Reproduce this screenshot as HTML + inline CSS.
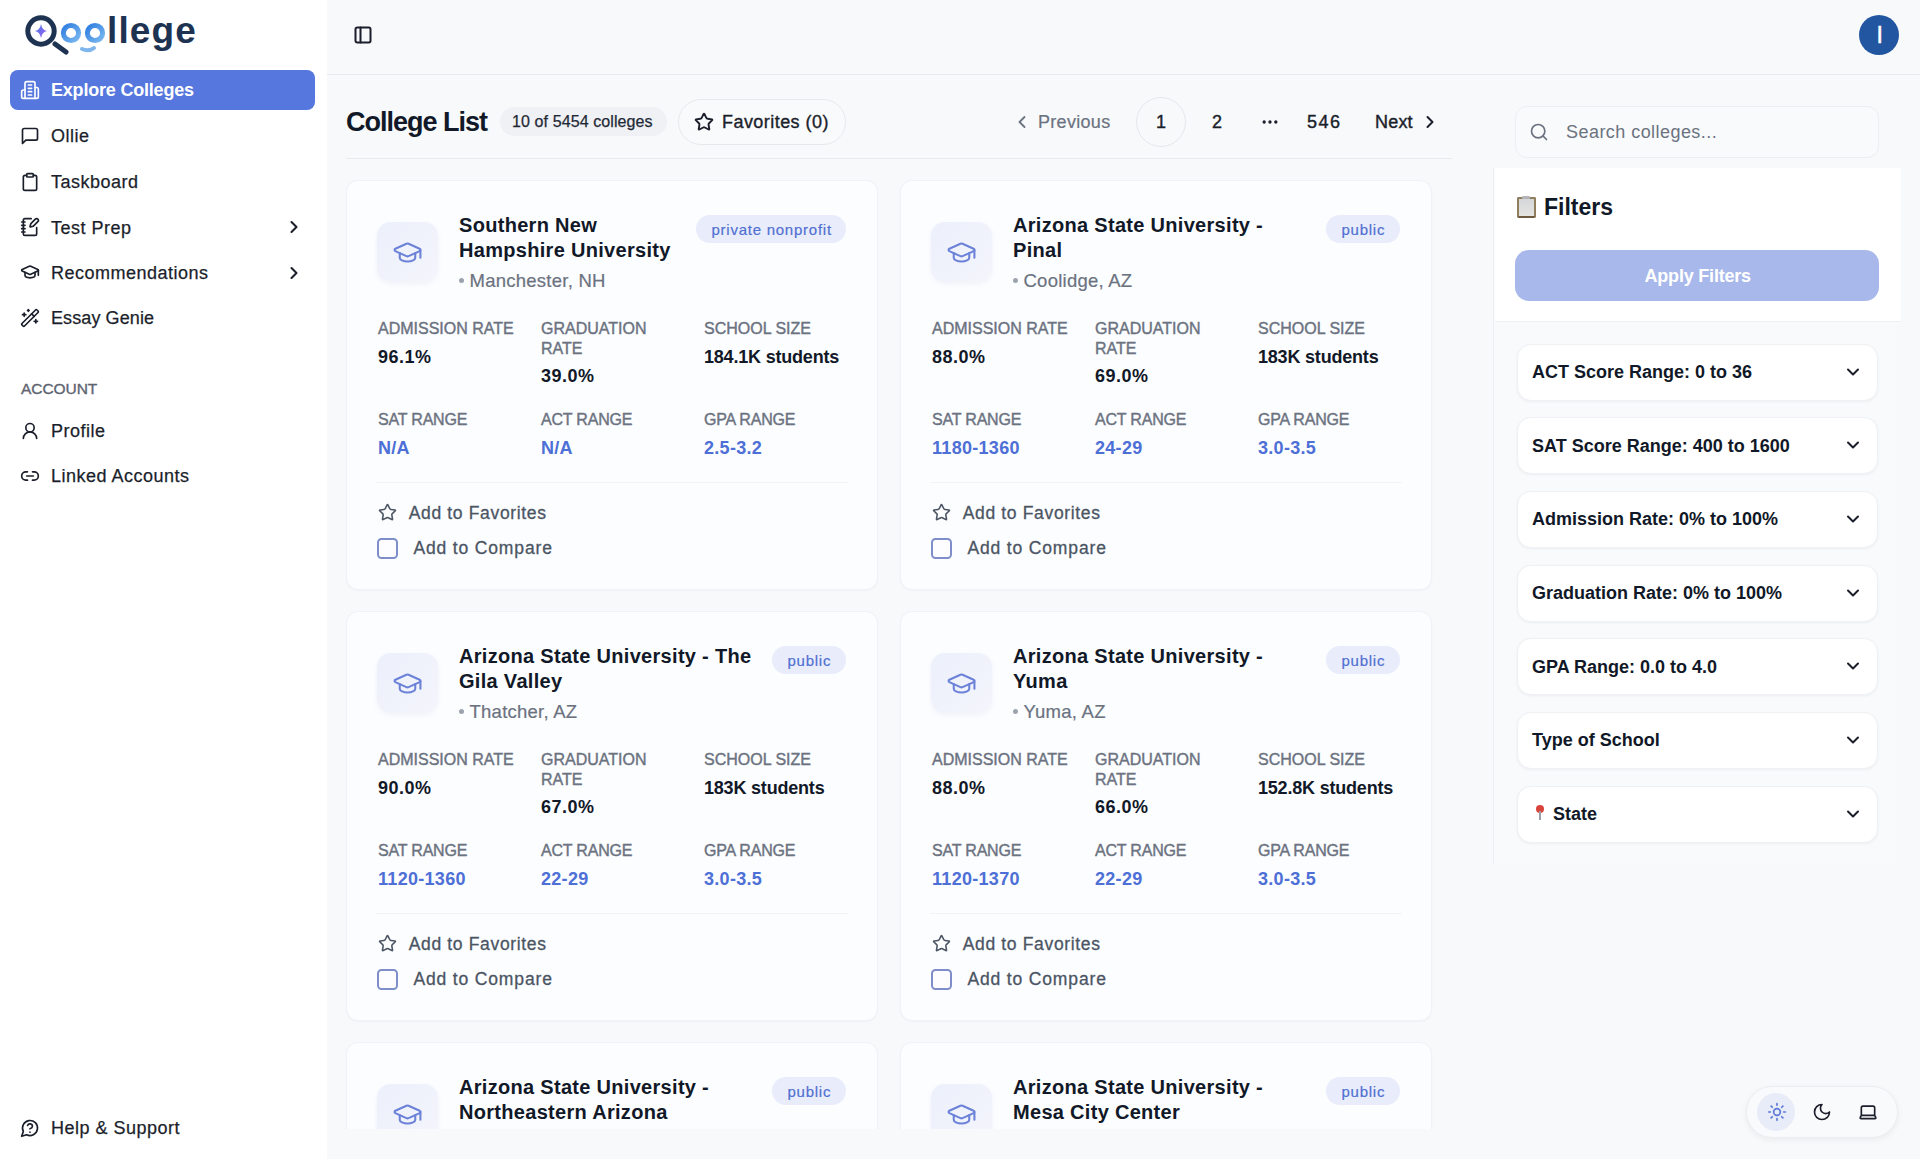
<!DOCTYPE html>
<html><head><meta charset="utf-8"><style>
*{box-sizing:border-box;margin:0;padding:0}
html,body{width:1920px;height:1159px;overflow:hidden}
body{font-family:"Liberation Sans",sans-serif;background:#f8f9fb;color:#111827;position:relative}
.t{position:absolute;white-space:nowrap;line-height:1}
.ic{position:absolute;display:block}
.box{position:absolute}
</style></head><body>
<div class="box" style="left:0;top:0;width:327px;height:1159px;background:#ffffff"></div>
<svg class="ic" style="left:0;top:0;width:240px;height:70px" viewBox="0 0 240 70">
<defs><linearGradient id="og" x1="0" y1="0" x2="1" y2="1"><stop offset="0" stop-color="#2f7de0"/><stop offset="1" stop-color="#7bb8f0"/></linearGradient>
<linearGradient id="sg" x1="0" y1="0" x2="1" y2="1"><stop offset="0" stop-color="#4a7be8"/><stop offset="1" stop-color="#9b5cf0"/></linearGradient></defs>
<circle cx="41" cy="31" r="13.2" fill="none" stroke="#1e3352" stroke-width="5"/>
<path d="M55 44 L66 52" stroke="#1e3352" stroke-width="5" stroke-linecap="round"/>
<path d="M41 24 Q42 30 47 31 Q42 32 41 38 Q40 32 35 31 Q40 30 41 24Z" fill="url(#sg)"/>
<circle cx="71" cy="33" r="7.6" fill="none" stroke="url(#og)" stroke-width="5"/>
<circle cx="95" cy="33" r="7.6" fill="none" stroke="url(#og)" stroke-width="5"/>
<path d="M82 49 Q89 52 94 48" fill="none" stroke="#7fb6ee" stroke-width="4" stroke-linecap="round"/>
<text x="107" y="42.8" font-family="Liberation Sans" font-weight="bold" font-size="37" fill="#1e3352" letter-spacing="1.1">llege</text>
</svg>
<div class="box" style="left:10px;top:70px;width:305px;height:40px;border-radius:8px;background:#5577de"></div>
<svg class="ic" style="left:20px;top:79.5px;width:20px;height:20px;" viewBox="0 0 24 24" fill="none" stroke="#ffffff" stroke-width="2" stroke-linecap="round" stroke-linejoin="round"><path d="M6 22V4a2 2 0 0 1 2-2h8a2 2 0 0 1 2 2v18Z"/><path d="M6 12H4a2 2 0 0 0-2 2v6a2 2 0 0 0 2 2h2"/><path d="M18 9h2a2 2 0 0 1 2 2v9a2 2 0 0 1-2 2h-2"/><path d="M10 6h4"/><path d="M10 10h4"/><path d="M10 14h4"/><path d="M10 18h4"/></svg>
<div class="t" style="left:51px;top:80.76px;font-size:18px;color:#ffffff;font-weight:bold;letter-spacing:-0.2px;">Explore Colleges</div>
<svg class="ic" style="left:20px;top:125.5px;width:20px;height:20px;" viewBox="0 0 24 24" fill="none" stroke="#1b1f2b" stroke-width="2" stroke-linecap="round" stroke-linejoin="round"><path d="M21 15a2 2 0 0 1-2 2H7l-4 4V5a2 2 0 0 1 2-2h14a2 2 0 0 1 2 2z"/></svg>
<div class="t" style="left:51px;top:126.76px;font-size:18px;color:#1b1f2b;font-weight:normal;letter-spacing:0.5px;-webkit-text-stroke:0.25px #1b1f2b;">Ollie</div>
<svg class="ic" style="left:20px;top:171.5px;width:20px;height:20px;" viewBox="0 0 24 24" fill="none" stroke="#1b1f2b" stroke-width="2" stroke-linecap="round" stroke-linejoin="round"><rect width="8" height="4" x="8" y="2" rx="1" ry="1"/><path d="M16 4h2a2 2 0 0 1 2 2v14a2 2 0 0 1-2 2H6a2 2 0 0 1-2-2V6a2 2 0 0 1 2-2h2"/></svg>
<div class="t" style="left:51px;top:172.76px;font-size:18px;color:#1b1f2b;font-weight:normal;letter-spacing:0.5px;-webkit-text-stroke:0.25px #1b1f2b;">Taskboard</div>
<svg class="ic" style="left:20px;top:217.25px;width:20px;height:20px;" viewBox="0 0 24 24" fill="none" stroke="#1b1f2b" stroke-width="2" stroke-linecap="round" stroke-linejoin="round"><path d="M13.4 2H6a2 2 0 0 0-2 2v16a2 2 0 0 0 2 2h12a2 2 0 0 0 2-2v-7.4"/><path d="M2 6h4"/><path d="M2 10h4"/><path d="M2 14h4"/><path d="M2 18h4"/><path d="M21.378 5.626a1 1 0 1 0-3.004-3.004l-5.01 5.012a2 2 0 0 0-.506.854l-.837 2.87a.5.5 0 0 0 .62.62l2.87-.837a2 2 0 0 0 .854-.506z"/></svg>
<div class="t" style="left:51px;top:218.51px;font-size:18px;color:#1b1f2b;font-weight:normal;letter-spacing:0.5px;-webkit-text-stroke:0.25px #1b1f2b;">Test Prep</div>
<svg class="ic" style="left:284.3px;top:217.25px;width:20px;height:20px;" viewBox="0 0 24 24" fill="none" stroke="#1b1f2b" stroke-width="2.5" stroke-linecap="round" stroke-linejoin="round"><path d="m9 18 6-6-6-6"/></svg>
<svg class="ic" style="left:20px;top:262.25px;width:20px;height:20px;" viewBox="0 0 24 24" fill="none" stroke="#1b1f2b" stroke-width="2" stroke-linecap="round" stroke-linejoin="round"><path d="M21.42 10.922a1 1 0 0 0-.019-1.838L12.83 5.18a2 2 0 0 0-1.66 0L2.6 9.08a1 1 0 0 0 0 1.832l8.57 3.908a2 2 0 0 0 1.66 0z"/><path d="M22 10v6"/><path d="M6 12.5V16a6 3 0 0 0 12 0v-3.5"/></svg>
<div class="t" style="left:51px;top:263.51px;font-size:18px;color:#1b1f2b;font-weight:normal;letter-spacing:0.5px;-webkit-text-stroke:0.25px #1b1f2b;">Recommendations</div>
<svg class="ic" style="left:284.3px;top:263.05px;width:20px;height:20px;" viewBox="0 0 24 24" fill="none" stroke="#1b1f2b" stroke-width="2.5" stroke-linecap="round" stroke-linejoin="round"><path d="m9 18 6-6-6-6"/></svg>
<svg class="ic" style="left:20px;top:308.0px;width:20px;height:20px;" viewBox="0 0 24 24" fill="none" stroke="#1b1f2b" stroke-width="2" stroke-linecap="round" stroke-linejoin="round"><path d="m21.64 3.64-1.28-1.28a1.21 1.21 0 0 0-1.72 0L2.36 18.64a1.21 1.21 0 0 0 0 1.72l1.28 1.28a1.2 1.2 0 0 0 1.72 0L21.64 5.36a1.2 1.2 0 0 0 0-1.72"/><path d="m14 7 3 3"/><path d="M5 6v4"/><path d="M19 14v4"/><path d="M10 2v2"/><path d="M7 8H3"/><path d="M21 16h-4"/><path d="M11 3H9"/></svg>
<div class="t" style="left:51px;top:309.26px;font-size:18px;color:#1b1f2b;font-weight:normal;letter-spacing:0.1px;-webkit-text-stroke:0.25px #1b1f2b;">Essay Genie</div>
<svg class="ic" style="left:20px;top:420.5px;width:20px;height:20px;" viewBox="0 0 24 24" fill="none" stroke="#1b1f2b" stroke-width="2" stroke-linecap="round" stroke-linejoin="round"><circle cx="12" cy="8" r="5"/><path d="M20 21a8 8 0 0 0-16 0"/></svg>
<div class="t" style="left:51px;top:421.76px;font-size:18px;color:#1b1f2b;font-weight:normal;letter-spacing:0.5px;-webkit-text-stroke:0.25px #1b1f2b;">Profile</div>
<svg class="ic" style="left:20px;top:465.5px;width:20px;height:20px;" viewBox="0 0 24 24" fill="none" stroke="#1b1f2b" stroke-width="2" stroke-linecap="round" stroke-linejoin="round"><path d="M9 17H7A5 5 0 0 1 7 7h2"/><path d="M15 7h2a5 5 0 1 1 0 10h-2"/><line x1="8" x2="16" y1="12" y2="12"/></svg>
<div class="t" style="left:51px;top:466.76px;font-size:18px;color:#1b1f2b;font-weight:normal;letter-spacing:0.5px;-webkit-text-stroke:0.25px #1b1f2b;">Linked Accounts</div>
<svg class="ic" style="left:20px;top:1117.9px;width:20px;height:20px;" viewBox="0 0 24 24" fill="none" stroke="#1b1f2b" stroke-width="2" stroke-linecap="round" stroke-linejoin="round"><path d="M7.9 20A9 9 0 1 0 4 16.1L2 22Z"/><path d="M9.09 9a3 3 0 0 1 5.83 1c0 2-3 3-3 3"/><path d="M12 17h.01"/></svg>
<div class="t" style="left:51px;top:1119.16px;font-size:18px;color:#1b1f2b;font-weight:normal;letter-spacing:0.5px;-webkit-text-stroke:0.25px #1b1f2b;">Help &amp; Support</div>
<div class="t" style="left:21px;top:381.48px;font-size:15.5px;color:#5d6370;font-weight:normal;letter-spacing:-0.05px;-webkit-text-stroke:0.35px #5d6370;">ACCOUNT</div>
<div class="box" style="left:327px;top:74px;width:1593px;height:1px;background:#e8eaee"></div>
<svg class="ic" style="left:353px;top:25.3px;width:20px;height:20px;" viewBox="0 0 24 24" fill="none" stroke="#1b1f2b" stroke-width="2.4" stroke-linecap="round" stroke-linejoin="round"><rect width="18" height="18" x="3" y="3" rx="2"/><path d="M9 3v18"/></svg>
<div class="box" style="left:1859px;top:14.5px;width:40px;height:40px;border-radius:50%;background:#2256a0"></div>
<div class="t" style="left:1876.6px;top:23.83px;font-size:23px;color:#ffffff;font-weight:normal;letter-spacing:0px;-webkit-text-stroke:0.5px #ffffff;">I</div>
<div class="t" style="left:346px;top:108.54px;font-size:27px;color:#111827;font-weight:bold;letter-spacing:-1px;">College List</div>
<div class="box" style="left:500px;top:107px;width:167px;height:29px;border-radius:15px;background:#eff1f4"></div>
<div class="t" style="left:512px;top:113.96px;font-size:16px;color:#1f2937;font-weight:normal;letter-spacing:0.1px;-webkit-text-stroke:0.25px #1f2937;">10 of 5454 colleges</div>
<div class="box" style="left:678px;top:99px;width:168px;height:46px;border-radius:23px;border:1.5px solid #e8e9ed;background:#f9fafb"></div>
<svg class="ic" style="left:694px;top:111.5px;width:20px;height:20px;" viewBox="0 0 24 24" fill="none" stroke="#1b1f2b" stroke-width="2.3" stroke-linecap="round" stroke-linejoin="round"><path d="M11.525 2.295a.53.53 0 0 1 .95 0l2.31 4.679a2.123 2.123 0 0 0 1.595 1.16l5.166.756a.53.53 0 0 1 .294.904l-3.736 3.638a2.123 2.123 0 0 0-.611 1.878l.882 5.14a.53.53 0 0 1-.771.56l-4.618-2.428a2.122 2.122 0 0 0-1.973 0L6.396 21.01a.53.53 0 0 1-.77-.56l.881-5.139a2.122 2.122 0 0 0-.611-1.879L2.16 9.795a.53.53 0 0 1 .294-.906l5.165-.755a2.122 2.122 0 0 0 1.597-1.16z"/></svg>
<div class="t" style="left:722px;top:113.16px;font-size:18px;color:#1b1f2b;font-weight:normal;letter-spacing:0.45px;-webkit-text-stroke:0.35px #1b1f2b;">Favorites (0)</div>
<svg class="ic" style="left:1012px;top:112px;width:20px;height:20px;" viewBox="0 0 24 24" fill="none" stroke="#6b7280" stroke-width="2.2" stroke-linecap="round" stroke-linejoin="round"><path d="m15 18-6-6 6-6"/></svg>
<div class="t" style="left:1038px;top:112.96px;font-size:18px;color:#6b7280;font-weight:normal;letter-spacing:0.3px;-webkit-text-stroke:0.2px #6b7280;">Previous</div>
<div class="box" style="left:1136px;top:97px;width:50px;height:50px;border-radius:50%;border:1px solid #e5e7eb"></div>
<div class="t" style="left:1156px;top:112.96px;font-size:18px;color:#1b1f2b;font-weight:normal;letter-spacing:0px;-webkit-text-stroke:0.4px #1b1f2b;">1</div>
<div class="t" style="left:1212px;top:112.96px;font-size:18px;color:#1b1f2b;font-weight:normal;letter-spacing:0px;-webkit-text-stroke:0.4px #1b1f2b;">2</div>
<svg class="ic" style="left:1260px;top:111.5px;width:20px;height:20px;" viewBox="0 0 24 24" fill="none" stroke="#1b1f2b" stroke-width="2" stroke-linecap="round" stroke-linejoin="round"><circle cx="12" cy="12" r="1"/><circle cx="19" cy="12" r="1"/><circle cx="5" cy="12" r="1"/></svg>
<div class="t" style="left:1307px;top:112.96px;font-size:18px;color:#1b1f2b;font-weight:normal;letter-spacing:1.5px;-webkit-text-stroke:0.4px #1b1f2b;">546</div>
<div class="t" style="left:1375px;top:112.96px;font-size:18px;color:#1b1f2b;font-weight:normal;letter-spacing:0.2px;-webkit-text-stroke:0.4px #1b1f2b;">Next</div>
<svg class="ic" style="left:1420px;top:112px;width:20px;height:20px;" viewBox="0 0 24 24" fill="none" stroke="#1b1f2b" stroke-width="2.4" stroke-linecap="round" stroke-linejoin="round"><path d="m9 18 6-6-6-6"/></svg>
<div class="box" style="left:346px;top:157.5px;width:1106px;height:1.5px;background:#e8eaee"></div>
<div class="box" style="left:327px;top:0;width:1160px;height:1128.5px;overflow:hidden">
<div class="box" style="left:19px;top:180px;width:532px;height:410px;background:#fcfdff;border:1px solid #f1f2f5;border-radius:12px;overflow:hidden;box-shadow:0 1px 2px rgba(16,24,40,0.03)">
<div class="box" style="left:30px;top:41px;width:61px;height:60px;border-radius:14px;background:linear-gradient(135deg,#ecf0fb,#f4f5fc);box-shadow:0 2px 5px rgba(80,100,170,0.07)"></div>
<svg class="ic" style="left:45.2px;top:55.7px;width:31px;height:31px;" viewBox="0 0 24 24" fill="none" stroke="#6b82d8" stroke-width="1.6" stroke-linecap="round" stroke-linejoin="round"><path d="M21.42 10.922a1 1 0 0 0-.019-1.838L12.83 5.18a2 2 0 0 0-1.66 0L2.6 9.08a1 1 0 0 0 0 1.832l8.57 3.908a2 2 0 0 0 1.66 0z"/><path d="M22 10v6"/><path d="M6 12.5V16a6 3 0 0 0 12 0v-3.5"/></svg>
<div class="t" style="left:112px;top:33.77px;font-size:20px;color:#111827;font-weight:bold;letter-spacing:0.3px;">Southern New</div>
<div class="t" style="left:112px;top:58.77px;font-size:20px;color:#111827;font-weight:bold;letter-spacing:0.3px;">Hampshire University</div>
<div class="box" style="left:112.2px;top:96.9px;width:5px;height:5px;border-radius:50%;background:#9ca3af"></div>
<div class="t" style="left:122.5px;top:91.04px;font-size:18.5px;color:#6b7280;font-weight:normal;letter-spacing:0.25px;-webkit-text-stroke:0.2px #6b7280;">Manchester, NH</div>
<div class="box" style="left:349px;top:33.5px;width:150px;height:28px;border-radius:14px;background:#e9edfb"></div>
<div class="t" style="left:364.5px;top:40.50px;font-size:15px;color:#5070d2;font-weight:normal;letter-spacing:0.75px;-webkit-text-stroke:0.2px #5070d2;">private nonprofit</div>
<div class="t" style="left:31px;top:140.46px;font-size:16px;color:#6b7280;font-weight:normal;letter-spacing:0px;-webkit-text-stroke:0.4px #6b7280;">ADMISSION RATE</div>
<div class="t" style="left:194px;top:140.46px;font-size:16px;color:#6b7280;font-weight:normal;letter-spacing:0px;-webkit-text-stroke:0.4px #6b7280;">GRADUATION</div>
<div class="t" style="left:194px;top:160.46px;font-size:16px;color:#6b7280;font-weight:normal;letter-spacing:0px;-webkit-text-stroke:0.4px #6b7280;">RATE</div>
<div class="t" style="left:357px;top:140.46px;font-size:16px;color:#6b7280;font-weight:normal;letter-spacing:0px;-webkit-text-stroke:0.4px #6b7280;">SCHOOL SIZE</div>
<div class="t" style="left:31px;top:166.56px;font-size:18px;color:#111827;font-weight:bold;letter-spacing:0.5px;">96.1%</div>
<div class="t" style="left:194px;top:186.36px;font-size:18px;color:#111827;font-weight:bold;letter-spacing:0.5px;">39.0%</div>
<div class="t" style="left:357px;top:166.56px;font-size:18px;color:#111827;font-weight:bold;letter-spacing:-0.2px;">184.1K students</div>
<div class="t" style="left:31px;top:230.66px;font-size:16px;color:#6b7280;font-weight:normal;letter-spacing:-0.2px;-webkit-text-stroke:0.4px #6b7280;">SAT RANGE</div>
<div class="t" style="left:31px;top:257.56px;font-size:18px;color:#4d6fd6;font-weight:bold;letter-spacing:0.3px;">N/A</div>
<div class="t" style="left:194px;top:230.66px;font-size:16px;color:#6b7280;font-weight:normal;letter-spacing:-0.2px;-webkit-text-stroke:0.4px #6b7280;">ACT RANGE</div>
<div class="t" style="left:194px;top:257.56px;font-size:18px;color:#4d6fd6;font-weight:bold;letter-spacing:0.3px;">N/A</div>
<div class="t" style="left:357px;top:230.66px;font-size:16px;color:#6b7280;font-weight:normal;letter-spacing:-0.2px;-webkit-text-stroke:0.4px #6b7280;">GPA RANGE</div>
<div class="t" style="left:357px;top:257.56px;font-size:18px;color:#4d6fd6;font-weight:bold;letter-spacing:0.3px;">2.5-3.2</div>
<div class="box" style="left:29px;top:300.5px;width:472px;height:1px;background:#f3f4f6"></div>
<svg class="ic" style="left:30.7px;top:322.3px;width:19px;height:19px;" viewBox="0 0 24 24" fill="none" stroke="#4b5563" stroke-width="2" stroke-linecap="round" stroke-linejoin="round"><path d="M11.525 2.295a.53.53 0 0 1 .95 0l2.31 4.679a2.123 2.123 0 0 0 1.595 1.16l5.166.756a.53.53 0 0 1 .294.904l-3.736 3.638a2.123 2.123 0 0 0-.611 1.878l.882 5.14a.53.53 0 0 1-.771.56l-4.618-2.428a2.122 2.122 0 0 0-1.973 0L6.396 21.01a.53.53 0 0 1-.77-.56l.881-5.139a2.122 2.122 0 0 0-.611-1.879L2.16 9.795a.53.53 0 0 1 .294-.906l5.165-.755a2.122 2.122 0 0 0 1.597-1.16z"/></svg>
<div class="t" style="left:61.75px;top:324.19px;font-size:17.5px;color:#4b5563;font-weight:normal;letter-spacing:0.65px;-webkit-text-stroke:0.3px #4b5563;">Add to Favorites</div>
<div class="box" style="left:30px;top:357px;width:20.5px;height:20.5px;border-radius:4.5px;border:2px solid #7f8dca;background:#fdfdff"></div>
<div class="t" style="left:66.4px;top:359.39px;font-size:17.5px;color:#4b5563;font-weight:normal;letter-spacing:0.85px;-webkit-text-stroke:0.3px #4b5563;">Add to Compare</div>
</div>
<div class="box" style="left:573px;top:180px;width:532px;height:410px;background:#fcfdff;border:1px solid #f1f2f5;border-radius:12px;overflow:hidden;box-shadow:0 1px 2px rgba(16,24,40,0.03)">
<div class="box" style="left:30px;top:41px;width:61px;height:60px;border-radius:14px;background:linear-gradient(135deg,#ecf0fb,#f4f5fc);box-shadow:0 2px 5px rgba(80,100,170,0.07)"></div>
<svg class="ic" style="left:45.2px;top:55.7px;width:31px;height:31px;" viewBox="0 0 24 24" fill="none" stroke="#6b82d8" stroke-width="1.6" stroke-linecap="round" stroke-linejoin="round"><path d="M21.42 10.922a1 1 0 0 0-.019-1.838L12.83 5.18a2 2 0 0 0-1.66 0L2.6 9.08a1 1 0 0 0 0 1.832l8.57 3.908a2 2 0 0 0 1.66 0z"/><path d="M22 10v6"/><path d="M6 12.5V16a6 3 0 0 0 12 0v-3.5"/></svg>
<div class="t" style="left:112px;top:33.77px;font-size:20px;color:#111827;font-weight:bold;letter-spacing:0.3px;">Arizona State University -</div>
<div class="t" style="left:112px;top:58.77px;font-size:20px;color:#111827;font-weight:bold;letter-spacing:0.3px;">Pinal</div>
<div class="box" style="left:112.2px;top:96.9px;width:5px;height:5px;border-radius:50%;background:#9ca3af"></div>
<div class="t" style="left:122.5px;top:91.04px;font-size:18.5px;color:#6b7280;font-weight:normal;letter-spacing:0.25px;-webkit-text-stroke:0.2px #6b7280;">Coolidge, AZ</div>
<div class="box" style="left:425px;top:33.5px;width:74px;height:28px;border-radius:14px;background:#e9edfb"></div>
<div class="t" style="left:440.5px;top:40.50px;font-size:15px;color:#5070d2;font-weight:normal;letter-spacing:0.75px;-webkit-text-stroke:0.2px #5070d2;">public</div>
<div class="t" style="left:31px;top:140.46px;font-size:16px;color:#6b7280;font-weight:normal;letter-spacing:0px;-webkit-text-stroke:0.4px #6b7280;">ADMISSION RATE</div>
<div class="t" style="left:194px;top:140.46px;font-size:16px;color:#6b7280;font-weight:normal;letter-spacing:0px;-webkit-text-stroke:0.4px #6b7280;">GRADUATION</div>
<div class="t" style="left:194px;top:160.46px;font-size:16px;color:#6b7280;font-weight:normal;letter-spacing:0px;-webkit-text-stroke:0.4px #6b7280;">RATE</div>
<div class="t" style="left:357px;top:140.46px;font-size:16px;color:#6b7280;font-weight:normal;letter-spacing:0px;-webkit-text-stroke:0.4px #6b7280;">SCHOOL SIZE</div>
<div class="t" style="left:31px;top:166.56px;font-size:18px;color:#111827;font-weight:bold;letter-spacing:0.5px;">88.0%</div>
<div class="t" style="left:194px;top:186.36px;font-size:18px;color:#111827;font-weight:bold;letter-spacing:0.5px;">69.0%</div>
<div class="t" style="left:357px;top:166.56px;font-size:18px;color:#111827;font-weight:bold;letter-spacing:-0.2px;">183K students</div>
<div class="t" style="left:31px;top:230.66px;font-size:16px;color:#6b7280;font-weight:normal;letter-spacing:-0.2px;-webkit-text-stroke:0.4px #6b7280;">SAT RANGE</div>
<div class="t" style="left:31px;top:257.56px;font-size:18px;color:#4d6fd6;font-weight:bold;letter-spacing:0.3px;">1180-1360</div>
<div class="t" style="left:194px;top:230.66px;font-size:16px;color:#6b7280;font-weight:normal;letter-spacing:-0.2px;-webkit-text-stroke:0.4px #6b7280;">ACT RANGE</div>
<div class="t" style="left:194px;top:257.56px;font-size:18px;color:#4d6fd6;font-weight:bold;letter-spacing:0.3px;">24-29</div>
<div class="t" style="left:357px;top:230.66px;font-size:16px;color:#6b7280;font-weight:normal;letter-spacing:-0.2px;-webkit-text-stroke:0.4px #6b7280;">GPA RANGE</div>
<div class="t" style="left:357px;top:257.56px;font-size:18px;color:#4d6fd6;font-weight:bold;letter-spacing:0.3px;">3.0-3.5</div>
<div class="box" style="left:29px;top:300.5px;width:472px;height:1px;background:#f3f4f6"></div>
<svg class="ic" style="left:30.7px;top:322.3px;width:19px;height:19px;" viewBox="0 0 24 24" fill="none" stroke="#4b5563" stroke-width="2" stroke-linecap="round" stroke-linejoin="round"><path d="M11.525 2.295a.53.53 0 0 1 .95 0l2.31 4.679a2.123 2.123 0 0 0 1.595 1.16l5.166.756a.53.53 0 0 1 .294.904l-3.736 3.638a2.123 2.123 0 0 0-.611 1.878l.882 5.14a.53.53 0 0 1-.771.56l-4.618-2.428a2.122 2.122 0 0 0-1.973 0L6.396 21.01a.53.53 0 0 1-.77-.56l.881-5.139a2.122 2.122 0 0 0-.611-1.879L2.16 9.795a.53.53 0 0 1 .294-.906l5.165-.755a2.122 2.122 0 0 0 1.597-1.16z"/></svg>
<div class="t" style="left:61.75px;top:324.19px;font-size:17.5px;color:#4b5563;font-weight:normal;letter-spacing:0.65px;-webkit-text-stroke:0.3px #4b5563;">Add to Favorites</div>
<div class="box" style="left:30px;top:357px;width:20.5px;height:20.5px;border-radius:4.5px;border:2px solid #7f8dca;background:#fdfdff"></div>
<div class="t" style="left:66.4px;top:359.39px;font-size:17.5px;color:#4b5563;font-weight:normal;letter-spacing:0.85px;-webkit-text-stroke:0.3px #4b5563;">Add to Compare</div>
</div>
<div class="box" style="left:19px;top:611px;width:532px;height:410px;background:#fcfdff;border:1px solid #f1f2f5;border-radius:12px;overflow:hidden;box-shadow:0 1px 2px rgba(16,24,40,0.03)">
<div class="box" style="left:30px;top:41px;width:61px;height:60px;border-radius:14px;background:linear-gradient(135deg,#ecf0fb,#f4f5fc);box-shadow:0 2px 5px rgba(80,100,170,0.07)"></div>
<svg class="ic" style="left:45.2px;top:55.7px;width:31px;height:31px;" viewBox="0 0 24 24" fill="none" stroke="#6b82d8" stroke-width="1.6" stroke-linecap="round" stroke-linejoin="round"><path d="M21.42 10.922a1 1 0 0 0-.019-1.838L12.83 5.18a2 2 0 0 0-1.66 0L2.6 9.08a1 1 0 0 0 0 1.832l8.57 3.908a2 2 0 0 0 1.66 0z"/><path d="M22 10v6"/><path d="M6 12.5V16a6 3 0 0 0 12 0v-3.5"/></svg>
<div class="t" style="left:112px;top:33.77px;font-size:20px;color:#111827;font-weight:bold;letter-spacing:0.3px;">Arizona State University - The</div>
<div class="t" style="left:112px;top:58.77px;font-size:20px;color:#111827;font-weight:bold;letter-spacing:0.3px;">Gila Valley</div>
<div class="box" style="left:112.2px;top:96.9px;width:5px;height:5px;border-radius:50%;background:#9ca3af"></div>
<div class="t" style="left:122.5px;top:91.04px;font-size:18.5px;color:#6b7280;font-weight:normal;letter-spacing:0.25px;-webkit-text-stroke:0.2px #6b7280;">Thatcher, AZ</div>
<div class="box" style="left:425px;top:33.5px;width:74px;height:28px;border-radius:14px;background:#e9edfb"></div>
<div class="t" style="left:440.5px;top:40.50px;font-size:15px;color:#5070d2;font-weight:normal;letter-spacing:0.75px;-webkit-text-stroke:0.2px #5070d2;">public</div>
<div class="t" style="left:31px;top:140.46px;font-size:16px;color:#6b7280;font-weight:normal;letter-spacing:0px;-webkit-text-stroke:0.4px #6b7280;">ADMISSION RATE</div>
<div class="t" style="left:194px;top:140.46px;font-size:16px;color:#6b7280;font-weight:normal;letter-spacing:0px;-webkit-text-stroke:0.4px #6b7280;">GRADUATION</div>
<div class="t" style="left:194px;top:160.46px;font-size:16px;color:#6b7280;font-weight:normal;letter-spacing:0px;-webkit-text-stroke:0.4px #6b7280;">RATE</div>
<div class="t" style="left:357px;top:140.46px;font-size:16px;color:#6b7280;font-weight:normal;letter-spacing:0px;-webkit-text-stroke:0.4px #6b7280;">SCHOOL SIZE</div>
<div class="t" style="left:31px;top:166.56px;font-size:18px;color:#111827;font-weight:bold;letter-spacing:0.5px;">90.0%</div>
<div class="t" style="left:194px;top:186.36px;font-size:18px;color:#111827;font-weight:bold;letter-spacing:0.5px;">67.0%</div>
<div class="t" style="left:357px;top:166.56px;font-size:18px;color:#111827;font-weight:bold;letter-spacing:-0.2px;">183K students</div>
<div class="t" style="left:31px;top:230.66px;font-size:16px;color:#6b7280;font-weight:normal;letter-spacing:-0.2px;-webkit-text-stroke:0.4px #6b7280;">SAT RANGE</div>
<div class="t" style="left:31px;top:257.56px;font-size:18px;color:#4d6fd6;font-weight:bold;letter-spacing:0.3px;">1120-1360</div>
<div class="t" style="left:194px;top:230.66px;font-size:16px;color:#6b7280;font-weight:normal;letter-spacing:-0.2px;-webkit-text-stroke:0.4px #6b7280;">ACT RANGE</div>
<div class="t" style="left:194px;top:257.56px;font-size:18px;color:#4d6fd6;font-weight:bold;letter-spacing:0.3px;">22-29</div>
<div class="t" style="left:357px;top:230.66px;font-size:16px;color:#6b7280;font-weight:normal;letter-spacing:-0.2px;-webkit-text-stroke:0.4px #6b7280;">GPA RANGE</div>
<div class="t" style="left:357px;top:257.56px;font-size:18px;color:#4d6fd6;font-weight:bold;letter-spacing:0.3px;">3.0-3.5</div>
<div class="box" style="left:29px;top:300.5px;width:472px;height:1px;background:#f3f4f6"></div>
<svg class="ic" style="left:30.7px;top:322.3px;width:19px;height:19px;" viewBox="0 0 24 24" fill="none" stroke="#4b5563" stroke-width="2" stroke-linecap="round" stroke-linejoin="round"><path d="M11.525 2.295a.53.53 0 0 1 .95 0l2.31 4.679a2.123 2.123 0 0 0 1.595 1.16l5.166.756a.53.53 0 0 1 .294.904l-3.736 3.638a2.123 2.123 0 0 0-.611 1.878l.882 5.14a.53.53 0 0 1-.771.56l-4.618-2.428a2.122 2.122 0 0 0-1.973 0L6.396 21.01a.53.53 0 0 1-.77-.56l.881-5.139a2.122 2.122 0 0 0-.611-1.879L2.16 9.795a.53.53 0 0 1 .294-.906l5.165-.755a2.122 2.122 0 0 0 1.597-1.16z"/></svg>
<div class="t" style="left:61.75px;top:324.19px;font-size:17.5px;color:#4b5563;font-weight:normal;letter-spacing:0.65px;-webkit-text-stroke:0.3px #4b5563;">Add to Favorites</div>
<div class="box" style="left:30px;top:357px;width:20.5px;height:20.5px;border-radius:4.5px;border:2px solid #7f8dca;background:#fdfdff"></div>
<div class="t" style="left:66.4px;top:359.39px;font-size:17.5px;color:#4b5563;font-weight:normal;letter-spacing:0.85px;-webkit-text-stroke:0.3px #4b5563;">Add to Compare</div>
</div>
<div class="box" style="left:573px;top:611px;width:532px;height:410px;background:#fcfdff;border:1px solid #f1f2f5;border-radius:12px;overflow:hidden;box-shadow:0 1px 2px rgba(16,24,40,0.03)">
<div class="box" style="left:30px;top:41px;width:61px;height:60px;border-radius:14px;background:linear-gradient(135deg,#ecf0fb,#f4f5fc);box-shadow:0 2px 5px rgba(80,100,170,0.07)"></div>
<svg class="ic" style="left:45.2px;top:55.7px;width:31px;height:31px;" viewBox="0 0 24 24" fill="none" stroke="#6b82d8" stroke-width="1.6" stroke-linecap="round" stroke-linejoin="round"><path d="M21.42 10.922a1 1 0 0 0-.019-1.838L12.83 5.18a2 2 0 0 0-1.66 0L2.6 9.08a1 1 0 0 0 0 1.832l8.57 3.908a2 2 0 0 0 1.66 0z"/><path d="M22 10v6"/><path d="M6 12.5V16a6 3 0 0 0 12 0v-3.5"/></svg>
<div class="t" style="left:112px;top:33.77px;font-size:20px;color:#111827;font-weight:bold;letter-spacing:0.3px;">Arizona State University -</div>
<div class="t" style="left:112px;top:58.77px;font-size:20px;color:#111827;font-weight:bold;letter-spacing:0.3px;">Yuma</div>
<div class="box" style="left:112.2px;top:96.9px;width:5px;height:5px;border-radius:50%;background:#9ca3af"></div>
<div class="t" style="left:122.5px;top:91.04px;font-size:18.5px;color:#6b7280;font-weight:normal;letter-spacing:0.25px;-webkit-text-stroke:0.2px #6b7280;">Yuma, AZ</div>
<div class="box" style="left:425px;top:33.5px;width:74px;height:28px;border-radius:14px;background:#e9edfb"></div>
<div class="t" style="left:440.5px;top:40.50px;font-size:15px;color:#5070d2;font-weight:normal;letter-spacing:0.75px;-webkit-text-stroke:0.2px #5070d2;">public</div>
<div class="t" style="left:31px;top:140.46px;font-size:16px;color:#6b7280;font-weight:normal;letter-spacing:0px;-webkit-text-stroke:0.4px #6b7280;">ADMISSION RATE</div>
<div class="t" style="left:194px;top:140.46px;font-size:16px;color:#6b7280;font-weight:normal;letter-spacing:0px;-webkit-text-stroke:0.4px #6b7280;">GRADUATION</div>
<div class="t" style="left:194px;top:160.46px;font-size:16px;color:#6b7280;font-weight:normal;letter-spacing:0px;-webkit-text-stroke:0.4px #6b7280;">RATE</div>
<div class="t" style="left:357px;top:140.46px;font-size:16px;color:#6b7280;font-weight:normal;letter-spacing:0px;-webkit-text-stroke:0.4px #6b7280;">SCHOOL SIZE</div>
<div class="t" style="left:31px;top:166.56px;font-size:18px;color:#111827;font-weight:bold;letter-spacing:0.5px;">88.0%</div>
<div class="t" style="left:194px;top:186.36px;font-size:18px;color:#111827;font-weight:bold;letter-spacing:0.5px;">66.0%</div>
<div class="t" style="left:357px;top:166.56px;font-size:18px;color:#111827;font-weight:bold;letter-spacing:-0.2px;">152.8K students</div>
<div class="t" style="left:31px;top:230.66px;font-size:16px;color:#6b7280;font-weight:normal;letter-spacing:-0.2px;-webkit-text-stroke:0.4px #6b7280;">SAT RANGE</div>
<div class="t" style="left:31px;top:257.56px;font-size:18px;color:#4d6fd6;font-weight:bold;letter-spacing:0.3px;">1120-1370</div>
<div class="t" style="left:194px;top:230.66px;font-size:16px;color:#6b7280;font-weight:normal;letter-spacing:-0.2px;-webkit-text-stroke:0.4px #6b7280;">ACT RANGE</div>
<div class="t" style="left:194px;top:257.56px;font-size:18px;color:#4d6fd6;font-weight:bold;letter-spacing:0.3px;">22-29</div>
<div class="t" style="left:357px;top:230.66px;font-size:16px;color:#6b7280;font-weight:normal;letter-spacing:-0.2px;-webkit-text-stroke:0.4px #6b7280;">GPA RANGE</div>
<div class="t" style="left:357px;top:257.56px;font-size:18px;color:#4d6fd6;font-weight:bold;letter-spacing:0.3px;">3.0-3.5</div>
<div class="box" style="left:29px;top:300.5px;width:472px;height:1px;background:#f3f4f6"></div>
<svg class="ic" style="left:30.7px;top:322.3px;width:19px;height:19px;" viewBox="0 0 24 24" fill="none" stroke="#4b5563" stroke-width="2" stroke-linecap="round" stroke-linejoin="round"><path d="M11.525 2.295a.53.53 0 0 1 .95 0l2.31 4.679a2.123 2.123 0 0 0 1.595 1.16l5.166.756a.53.53 0 0 1 .294.904l-3.736 3.638a2.123 2.123 0 0 0-.611 1.878l.882 5.14a.53.53 0 0 1-.771.56l-4.618-2.428a2.122 2.122 0 0 0-1.973 0L6.396 21.01a.53.53 0 0 1-.77-.56l.881-5.139a2.122 2.122 0 0 0-.611-1.879L2.16 9.795a.53.53 0 0 1 .294-.906l5.165-.755a2.122 2.122 0 0 0 1.597-1.16z"/></svg>
<div class="t" style="left:61.75px;top:324.19px;font-size:17.5px;color:#4b5563;font-weight:normal;letter-spacing:0.65px;-webkit-text-stroke:0.3px #4b5563;">Add to Favorites</div>
<div class="box" style="left:30px;top:357px;width:20.5px;height:20.5px;border-radius:4.5px;border:2px solid #7f8dca;background:#fdfdff"></div>
<div class="t" style="left:66.4px;top:359.39px;font-size:17.5px;color:#4b5563;font-weight:normal;letter-spacing:0.85px;-webkit-text-stroke:0.3px #4b5563;">Add to Compare</div>
</div>
<div class="box" style="left:19px;top:1042px;width:532px;height:410px;background:#fcfdff;border:1px solid #f1f2f5;border-radius:12px;overflow:hidden;box-shadow:0 1px 2px rgba(16,24,40,0.03)">
<div class="box" style="left:30px;top:41px;width:61px;height:60px;border-radius:14px;background:linear-gradient(135deg,#ecf0fb,#f4f5fc);box-shadow:0 2px 5px rgba(80,100,170,0.07)"></div>
<svg class="ic" style="left:45.2px;top:55.7px;width:31px;height:31px;" viewBox="0 0 24 24" fill="none" stroke="#6b82d8" stroke-width="1.6" stroke-linecap="round" stroke-linejoin="round"><path d="M21.42 10.922a1 1 0 0 0-.019-1.838L12.83 5.18a2 2 0 0 0-1.66 0L2.6 9.08a1 1 0 0 0 0 1.832l8.57 3.908a2 2 0 0 0 1.66 0z"/><path d="M22 10v6"/><path d="M6 12.5V16a6 3 0 0 0 12 0v-3.5"/></svg>
<div class="t" style="left:112px;top:33.77px;font-size:20px;color:#111827;font-weight:bold;letter-spacing:0.3px;">Arizona State University -</div>
<div class="t" style="left:112px;top:58.77px;font-size:20px;color:#111827;font-weight:bold;letter-spacing:0.3px;">Northeastern Arizona</div>
<div class="box" style="left:425px;top:33.5px;width:74px;height:28px;border-radius:14px;background:#e9edfb"></div>
<div class="t" style="left:440.5px;top:40.50px;font-size:15px;color:#5070d2;font-weight:normal;letter-spacing:0.75px;-webkit-text-stroke:0.2px #5070d2;">public</div>
</div>
<div class="box" style="left:573px;top:1042px;width:532px;height:410px;background:#fcfdff;border:1px solid #f1f2f5;border-radius:12px;overflow:hidden;box-shadow:0 1px 2px rgba(16,24,40,0.03)">
<div class="box" style="left:30px;top:41px;width:61px;height:60px;border-radius:14px;background:linear-gradient(135deg,#ecf0fb,#f4f5fc);box-shadow:0 2px 5px rgba(80,100,170,0.07)"></div>
<svg class="ic" style="left:45.2px;top:55.7px;width:31px;height:31px;" viewBox="0 0 24 24" fill="none" stroke="#6b82d8" stroke-width="1.6" stroke-linecap="round" stroke-linejoin="round"><path d="M21.42 10.922a1 1 0 0 0-.019-1.838L12.83 5.18a2 2 0 0 0-1.66 0L2.6 9.08a1 1 0 0 0 0 1.832l8.57 3.908a2 2 0 0 0 1.66 0z"/><path d="M22 10v6"/><path d="M6 12.5V16a6 3 0 0 0 12 0v-3.5"/></svg>
<div class="t" style="left:112px;top:33.77px;font-size:20px;color:#111827;font-weight:bold;letter-spacing:0.3px;">Arizona State University -</div>
<div class="t" style="left:112px;top:58.77px;font-size:20px;color:#111827;font-weight:bold;letter-spacing:0.3px;">Mesa City Center</div>
<div class="box" style="left:425px;top:33.5px;width:74px;height:28px;border-radius:14px;background:#e9edfb"></div>
<div class="t" style="left:440.5px;top:40.50px;font-size:15px;color:#5070d2;font-weight:normal;letter-spacing:0.75px;-webkit-text-stroke:0.2px #5070d2;">public</div>
</div>
</div>
<div class="box" style="left:1515px;top:106px;width:364px;height:52px;border-radius:12px;border:1px solid #eceef2;background:#f9fafb"></div>
<svg class="ic" style="left:1529px;top:122px;width:20px;height:20px;" viewBox="0 0 24 24" fill="none" stroke="#6b7280" stroke-width="2" stroke-linecap="round" stroke-linejoin="round"><circle cx="11" cy="11" r="8"/><path d="m21 21-4.3-4.3"/></svg>
<div class="t" style="left:1566px;top:123.36px;font-size:18px;color:#6b7280;font-weight:normal;letter-spacing:0.45px;">Search colleges...</div>
<div class="box" style="left:1493px;top:167px;width:403px;height:697px;background:#f9fafc;border-left:1.5px solid #eceef1"></div>
<div class="box" style="left:1494.5px;top:168px;width:406.5px;height:154px;background:#ffffff;border-bottom:1px solid #eef0f3"></div>
<div class="box" style="left:1516.5px;top:197px;width:19.5px;height:20.5px;border-radius:2px;background:linear-gradient(180deg,#d6d7da,#e4e4e2);border:2px solid #8f7f5c;border-bottom-color:#6e5a3e"></div>
<div class="box" style="left:1522px;top:195.5px;width:8px;height:3px;border-radius:1px;background:#b4b4b9"></div>
<div class="t" style="left:1544px;top:195.53px;font-size:23px;color:#111827;font-weight:bold;letter-spacing:0px;">Filters</div>
<div class="box" style="left:1515px;top:250px;width:364px;height:51px;border-radius:14px;background:#a8b8ea"></div>
<div class="t" style="left:1644.5px;top:266.76px;font-size:18px;color:#ffffff;font-weight:bold;letter-spacing:-0.2px;">Apply Filters</div>
<div class="box" style="left:1516.5px;top:343.50px;width:361.5px;height:57px;border-radius:14px;background:#ffffff;border:1px solid #eff1f4;box-shadow:0 1px 3px rgba(16,24,40,0.05)"></div>
<div class="t" style="left:1532px;top:362.96px;font-size:18px;color:#111827;font-weight:bold;letter-spacing:0px;">ACT Score Range: 0 to 36</div>
<svg class="ic" style="left:1842.5px;top:361.7px;width:20px;height:20px;" viewBox="0 0 24 24" fill="none" stroke="#1b1f2b" stroke-width="2.4" stroke-linecap="round" stroke-linejoin="round"><path d="m6 9 6 6 6-6"/></svg>
<div class="box" style="left:1516.5px;top:417.17px;width:361.5px;height:57px;border-radius:14px;background:#ffffff;border:1px solid #eff1f4;box-shadow:0 1px 3px rgba(16,24,40,0.05)"></div>
<div class="t" style="left:1532px;top:436.63px;font-size:18px;color:#111827;font-weight:bold;letter-spacing:0px;">SAT Score Range: 400 to 1600</div>
<svg class="ic" style="left:1842.5px;top:435.37px;width:20px;height:20px;" viewBox="0 0 24 24" fill="none" stroke="#1b1f2b" stroke-width="2.4" stroke-linecap="round" stroke-linejoin="round"><path d="m6 9 6 6 6-6"/></svg>
<div class="box" style="left:1516.5px;top:490.84px;width:361.5px;height:57px;border-radius:14px;background:#ffffff;border:1px solid #eff1f4;box-shadow:0 1px 3px rgba(16,24,40,0.05)"></div>
<div class="t" style="left:1532px;top:510.30px;font-size:18px;color:#111827;font-weight:bold;letter-spacing:0px;">Admission Rate: 0% to 100%</div>
<svg class="ic" style="left:1842.5px;top:509.04px;width:20px;height:20px;" viewBox="0 0 24 24" fill="none" stroke="#1b1f2b" stroke-width="2.4" stroke-linecap="round" stroke-linejoin="round"><path d="m6 9 6 6 6-6"/></svg>
<div class="box" style="left:1516.5px;top:564.51px;width:361.5px;height:57px;border-radius:14px;background:#ffffff;border:1px solid #eff1f4;box-shadow:0 1px 3px rgba(16,24,40,0.05)"></div>
<div class="t" style="left:1532px;top:583.97px;font-size:18px;color:#111827;font-weight:bold;letter-spacing:0px;">Graduation Rate: 0% to 100%</div>
<svg class="ic" style="left:1842.5px;top:582.71px;width:20px;height:20px;" viewBox="0 0 24 24" fill="none" stroke="#1b1f2b" stroke-width="2.4" stroke-linecap="round" stroke-linejoin="round"><path d="m6 9 6 6 6-6"/></svg>
<div class="box" style="left:1516.5px;top:638.18px;width:361.5px;height:57px;border-radius:14px;background:#ffffff;border:1px solid #eff1f4;box-shadow:0 1px 3px rgba(16,24,40,0.05)"></div>
<div class="t" style="left:1532px;top:657.64px;font-size:18px;color:#111827;font-weight:bold;letter-spacing:0px;">GPA Range: 0.0 to 4.0</div>
<svg class="ic" style="left:1842.5px;top:656.3800000000001px;width:20px;height:20px;" viewBox="0 0 24 24" fill="none" stroke="#1b1f2b" stroke-width="2.4" stroke-linecap="round" stroke-linejoin="round"><path d="m6 9 6 6 6-6"/></svg>
<div class="box" style="left:1516.5px;top:711.85px;width:361.5px;height:57px;border-radius:14px;background:#ffffff;border:1px solid #eff1f4;box-shadow:0 1px 3px rgba(16,24,40,0.05)"></div>
<div class="t" style="left:1532px;top:731.31px;font-size:18px;color:#111827;font-weight:bold;letter-spacing:0px;">Type of School</div>
<svg class="ic" style="left:1842.5px;top:730.0500000000001px;width:20px;height:20px;" viewBox="0 0 24 24" fill="none" stroke="#1b1f2b" stroke-width="2.4" stroke-linecap="round" stroke-linejoin="round"><path d="m6 9 6 6 6-6"/></svg>
<div class="box" style="left:1516.5px;top:785.52px;width:361.5px;height:57px;border-radius:14px;background:#ffffff;border:1px solid #eff1f4;box-shadow:0 1px 3px rgba(16,24,40,0.05)"></div>
<div class="box" style="left:1536px;top:805.02px;width:8px;height:8px;border-radius:50%;background:#d9443a"></div>
<div class="box" style="left:1539.2px;top:811.02px;width:1.6px;height:9px;background:#9aa0a6"></div>
<div class="t" style="left:1553px;top:804.98px;font-size:18px;color:#111827;font-weight:bold;letter-spacing:0px;">State</div>
<svg class="ic" style="left:1842.5px;top:803.72px;width:20px;height:20px;" viewBox="0 0 24 24" fill="none" stroke="#1b1f2b" stroke-width="2.4" stroke-linecap="round" stroke-linejoin="round"><path d="m6 9 6 6 6-6"/></svg>
<div class="box" style="left:1746px;top:1085.5px;width:152px;height:52px;border-radius:26px;background:#f9fafb;border:1px solid #eceef1;box-shadow:0 2px 6px rgba(0,0,0,0.06)"></div>
<div class="box" style="left:1757px;top:1093px;width:38px;height:38px;border-radius:50%;background:#e8ecf8"></div>
<svg class="ic" style="left:1766.5px;top:1102px;width:20px;height:20px;" viewBox="0 0 24 24" fill="none" stroke="#5b78d6" stroke-width="2" stroke-linecap="round" stroke-linejoin="round"><circle cx="12" cy="12" r="4"/><path d="M12 2v2"/><path d="M12 20v2"/><path d="m4.93 4.93 1.41 1.41"/><path d="m17.66 17.66 1.41 1.41"/><path d="M2 12h2"/><path d="M20 12h2"/><path d="m6.34 17.66-1.41 1.41"/><path d="m19.07 4.93-1.41 1.41"/></svg>
<svg class="ic" style="left:1812px;top:1102px;width:20px;height:20px;" viewBox="0 0 24 24" fill="none" stroke="#1b1f2b" stroke-width="2" stroke-linecap="round" stroke-linejoin="round"><path d="M12 3a6 6 0 0 0 9 9 9 9 0 1 1-9-9Z"/></svg>
<svg class="ic" style="left:1858px;top:1102px;width:20px;height:20px;" viewBox="0 0 24 24" fill="none" stroke="#1b1f2b" stroke-width="2" stroke-linecap="round" stroke-linejoin="round"><path d="M20 16V7a2 2 0 0 0-2-2H6a2 2 0 0 0-2 2v9m16 0H4m16 0 1.28 2.55a1 1 0 0 1-.9 1.45H3.62a1 1 0 0 1-.9-1.45L4 16"/></svg>
</body></html>
